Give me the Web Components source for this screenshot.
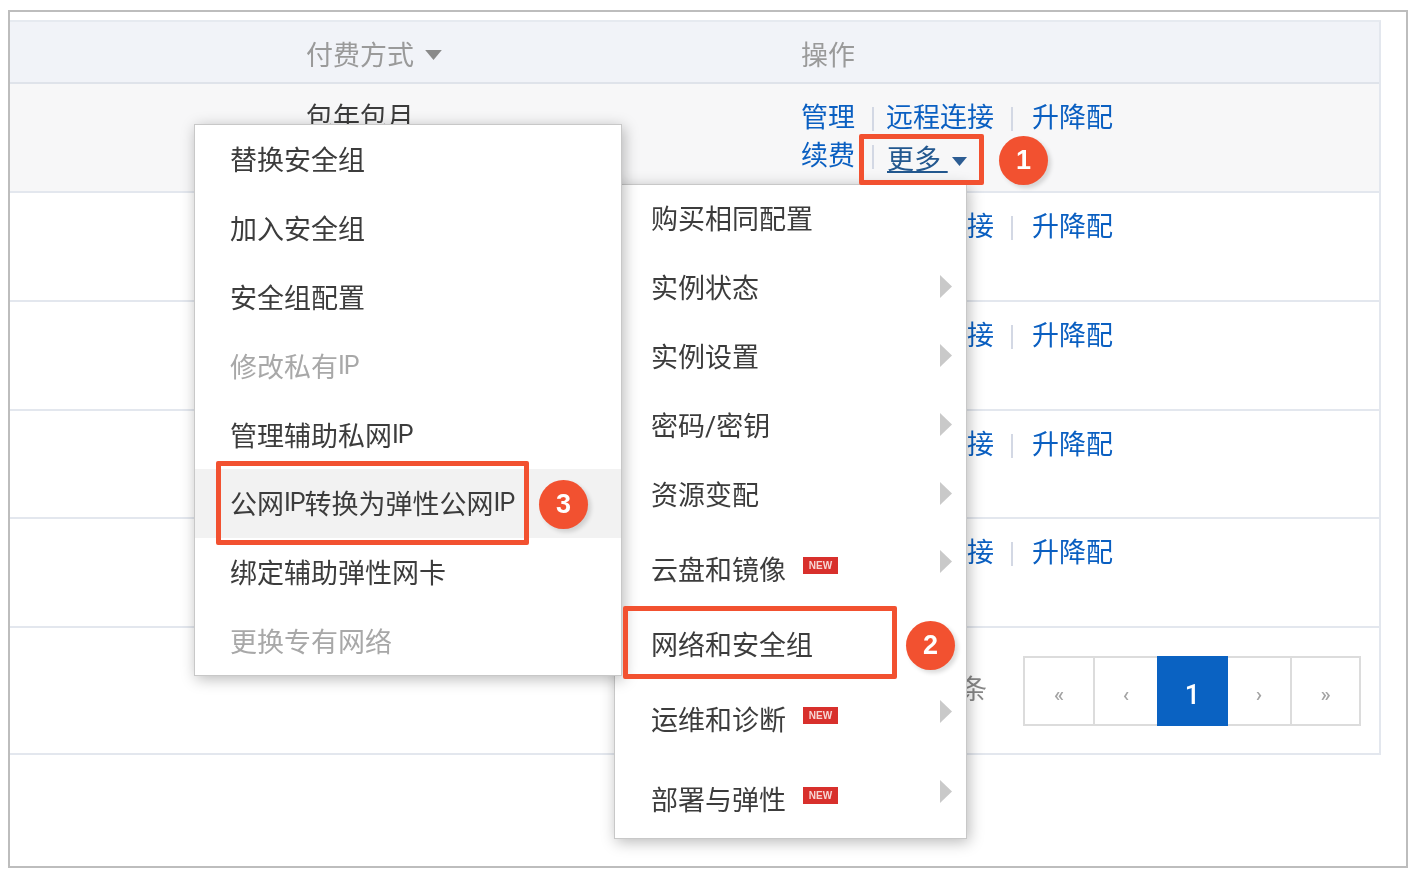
<!DOCTYPE html>
<html lang="zh-CN">
<head>
<meta charset="utf-8">
<title>实例列表</title>
<style>
	html,body{ margin:0; padding:0; background:#fff; }
	body{ font-family:Roboto,"Noto Sans CJK SC",sans-serif; }
</style>
</head>
<body>
<shot-frame>
	<inst-table>
		<inst-head></inst-head>
		<inst-row hover></inst-row>
		<inst-row covered></inst-row>
		<inst-row covered></inst-row>
		<inst-row covered style="--h:108px"></inst-row>
		<inst-row covered></inst-row>
		<inst-foot></inst-foot>
	</inst-table>

	<pop-menu style="--left:604px;--top:172px;--w:353px;--z:2;--pad:36px;--item:68.8px">
		<menu-item>购买相同配置</menu-item>
		<menu-item arrow>实例状态</menu-item>
		<menu-item arrow>实例设置</menu-item>
		<menu-item arrow>密码/密钥</menu-item>
		<menu-item arrow>资源变配</menu-item>
		<menu-item arrow badge style="--h:83px">云盘和镜像</menu-item>
		<menu-item style="--h:66px">网络和安全组</menu-item>
		<menu-item arrow badge style="--h:84px">运维和诊断</menu-item>
		<menu-item arrow badge style="--h:76px">部署与弹性</menu-item>
	</pop-menu>

	<pop-menu style="--left:184px;--top:112px;--w:428px;--z:3;--pad:35px;--item:68.8px;--lift:1px">
		<menu-item>替换安全组</menu-item>
		<menu-item>加入安全组</menu-item>
		<menu-item>安全组配置</menu-item>
		<menu-item off>修改私有<ip-text>IP</ip-text></menu-item>
		<menu-item>管理辅助私网<ip-text>IP</ip-text></menu-item>
		<menu-item active>公网<ip-text>IP</ip-text>转换为弹性公网<ip-text>IP</ip-text></menu-item>
		<menu-item>绑定辅助弹性网卡</menu-item>
		<menu-item off>更换专有网络</menu-item>
	</pop-menu>

	<note-box style="--left:849px;--top:122px;--w:125px;--h:51px"></note-box>
	<note-box style="--left:613px;--top:594px;--w:274px;--h:73px"></note-box>
	<note-box style="--left:206px;--top:449px;--w:313px;--h:84px"></note-box>
	<note-badge style="--left:989px;--top:124px">1</note-badge>
	<note-badge style="--left:896px;--top:609px">2</note-badge>
	<note-badge style="--left:529px;--top:468px">3</note-badge>
</shot-frame>

<script>
const caret = (color,w,h) => `<svg width="${w}" height="${h}" viewBox="0 0 10 6" aria-hidden="true"><path d="M0 0h10L5 6z" fill="${color}"/></svg>`;

class ShotFrame extends HTMLElement{
	constructor(){
		super();
		this.attachShadow({mode:'open'}).innerHTML = `
			<style>
				:host{
					display:block;
					position:relative;
					box-sizing:border-box;
					width:1400px;
					height:858px;
					margin:10px 0 0 8px;
					padding:8px 25px 0 0;
					border:2px solid #bdbdbd;
					background:#fff;
					overflow:hidden;
					filter:blur(.7px);
				}
			</style>
			<slot></slot>`;
	}
}

class InstTable extends HTMLElement{
	constructor(){
		super();
		this.attachShadow({mode:'open'}).innerHTML = `
			<style>
				:host{
					display:block;
					border-top:2px solid #e6eaf0;
					border-right:2px solid #e3e7ee;
					font-size:27px;
					color:#3c3c3c;
				}
			</style>
			<slot></slot>`;
	}
}

class InstHead extends HTMLElement{
	constructor(){
		super();
		this.attachShadow({mode:'open'}).innerHTML = `
			<style>
				:host{
					display:grid;
					grid-template-columns:296px 495px 1fr;
					align-items:center;
					box-sizing:border-box;
					height:62px;
					padding-top:2px;
					background:#f1f3f8;
					border-bottom:2px solid #dfe3ea;
					color:#9a9a9a;
				}
				.pay{ grid-column:2; display:flex; align-items:center; gap:11px; }
				svg{ margin-top:3px; }
			</style>
			<div class="pay"><span>付费方式</span>${caret('#8a8a8a',17,10)}</div>
			<div>操作</div>`;
	}
}

class InstRow extends HTMLElement{
	constructor(){
		super();
		const covered = this.hasAttribute('covered');
		this.attachShadow({mode:'open'}).innerHTML = `
			<style>
				:host{
					display:grid;
					grid-template-columns:296px 495px 1fr;
					box-sizing:border-box;
					height:var(--h,109px);
					padding-top:15px;
					border-bottom:2px solid #e3e7ee;
					background:#fff;
					line-height:38px;
				}
				:host([hover]){ background:#f7f7f8; }
				:host([covered]) .pay{ visibility:hidden; }
				.pay{ grid-column:2; }
			</style>
			<div class="pay">包年包月</div>
			<row-links ${covered ? 'covered' : ''}></row-links>`;
	}
}

class RowLinks extends HTMLElement{
	constructor(){
		super();
		this.attachShadow({mode:'open'}).innerHTML = `
			<style>
				:host{ display:block; color:#0a5fc1; }
				:host([covered]) .under{ visibility:hidden; }
				.line{ display:flex; align-items:flex-start; height:38px; white-space:nowrap; }
				i{ display:block; width:2px; height:24px; margin-top:8px; background:#d3d8e4; }
				.a{ margin:8px 12px 0 17px; }
				.b{ margin:8px 19px 0 17px; }
				.more{
					display:flex;
					align-items:center;
					gap:3px;
					margin:4px 0 0 13px;
					color:#23588f;
				}
				.more span{ white-space:pre; text-decoration:underline; text-underline-offset:2px; }
				.more svg{ margin-top:3px; }
			</style>
			<div class="line"><span class="under">管理</span><i class="a under"></i><span><span class="under">远程连</span>接</span><i class="b"></i><span>升降配</span></div>
			<div class="line"><span class="under">续费</span><i class="a under" style="margin-right:0"></i><div class="more"><span class="under">更多&nbsp;</span>${caret('#2d5d93',17,9)}</div></div>`;
	}
}

class InstFoot extends HTMLElement{
	constructor(){
		super();
		this.attachShadow({mode:'open'}).innerHTML = `
			<style>
				:host{
					display:flex;
					justify-content:flex-end;
					align-items:flex-start;
					box-sizing:border-box;
					height:127px;
					padding:28px 18px 0 0;
					border-bottom:2px solid #e3e7ee;
					color:#888;
				}
				.total{ margin:15px 36px 0 0; line-height:38px; }
				.hid{ visibility:hidden; }
			</style>
			<div class="total"><span class="hid">共有5</span>条</div>
			<page-nav></page-nav>`;
	}
}

class PageNav extends HTMLElement{
	constructor(){
		super();
		this.attachShadow({mode:'open'}).innerHTML = `
			<style>
				:host{ display:flex; height:70px; }
				div{
					box-sizing:border-box;
					display:flex;
					align-items:center;
					justify-content:center;
					height:70px;
					border:2px solid #dcdcdc;
					margin-left:-2px;
					font-size:21px;
					font-weight:500;
					color:#a4a4a4;
					padding-top:6px;
				}
				.on{
					background:#0a62c2;
					border-color:#0a62c2;
					color:#fff;
					font-size:27px;
					padding-top:8px;
					position:relative;
				}
			</style>
			<div style="width:72px;margin-left:0">«</div>
			<div style="width:66px">‹</div>
			<div class="on" style="width:71px">1</div>
			<div style="width:66px">›</div>
			<div style="width:71px">»</div>`;
	}
}

class PopMenu extends HTMLElement{
	constructor(){
		super();
		this.attachShadow({mode:'open'}).innerHTML = `
			<style>
				:host{
					display:block;
					position:absolute;
					box-sizing:border-box;
					left:var(--left);
					top:var(--top);
					width:var(--w);
					z-index:var(--z);
					background:#fff;
					border:1px solid #c8c8c8;
					box-shadow:2px 3px 14px rgba(0,0,0,.28);
					font-size:27px;
					color:#3c3c3c;
				}
			</style>
			<slot></slot>`;
	}
}

class MenuItem extends HTMLElement{
	constructor(){
		super();
		const badge = this.hasAttribute('badge') ? '<b>NEW</b>' : '';
		const arrow = this.hasAttribute('arrow')
			? `<svg class="${badge ? 'up' : ''}" width="12" height="23" viewBox="0 0 12 23" aria-hidden="true"><path d="M0 0l12 11.5L0 23z" fill="#c9c9c9"/></svg>`
			: '';
		this.attachShadow({mode:'open'}).innerHTML = `
			<style>
				:host{
					display:flex;
					align-items:center;
					box-sizing:border-box;
					height:var(--h,var(--item,69px));
					padding:0 14px var(--lift,3px) var(--pad,36px);
					white-space:nowrap;
				}
				:host([off]){ color:#a8a8a8; }
				:host([active]){ background:#f2f2f2; }
				b{
					display:block;
					width:35px;
					height:17px;
					margin:-6px 0 0 17px;
					background:#d8302c;
					color:#f6d5d4;
					font:700 10px/17px "Liberation Sans",sans-serif;
					text-align:center;
				}
				svg{ margin-left:auto; }
				svg.up{ margin-bottom:14px; }
			</style>
			<slot></slot>${badge}${arrow}`;
	}
}

class IpText extends HTMLElement{
	constructor(){
		super();
		this.attachShadow({mode:'open'}).innerHTML = `
			<style>:host{ display:inline; font-size:25px; letter-spacing:-1px; }</style>
			<slot></slot>`;
	}
}

class NoteBox extends HTMLElement{
	constructor(){
		super();
		this.attachShadow({mode:'open'}).innerHTML = `
			<style>
				:host{
					display:block;
					position:absolute;
					box-sizing:border-box;
					left:var(--left);
					top:var(--top);
					width:var(--w);
					height:var(--h);
					z-index:5;
					border:5px solid #f25130;
					border-radius:2px;
				}
			</style>`;
	}
}

class NoteBadge extends HTMLElement{
	constructor(){
		super();
		this.attachShadow({mode:'open'}).innerHTML = `
			<style>
				:host{
					display:flex;
					align-items:center;
					justify-content:center;
					position:absolute;
					left:var(--left);
					top:var(--top);
					width:49px;
					height:49px;
					z-index:6;
					border-radius:50%;
					background:#f25130;
					box-shadow:3px 3px 4px rgba(0,0,0,.14);
					color:#fff;
					font:700 27px "Liberation Sans",sans-serif;
				}
			</style>
			<slot></slot>`;
	}
}

customElements.define('shot-frame', ShotFrame);
customElements.define('inst-table', InstTable);
customElements.define('inst-head', InstHead);
customElements.define('inst-row', InstRow);
customElements.define('row-links', RowLinks);
customElements.define('inst-foot', InstFoot);
customElements.define('page-nav', PageNav);
customElements.define('pop-menu', PopMenu);
customElements.define('menu-item', MenuItem);
customElements.define('ip-text', IpText);
customElements.define('note-box', NoteBox);
customElements.define('note-badge', NoteBadge);
</script>
</body>
</html>
